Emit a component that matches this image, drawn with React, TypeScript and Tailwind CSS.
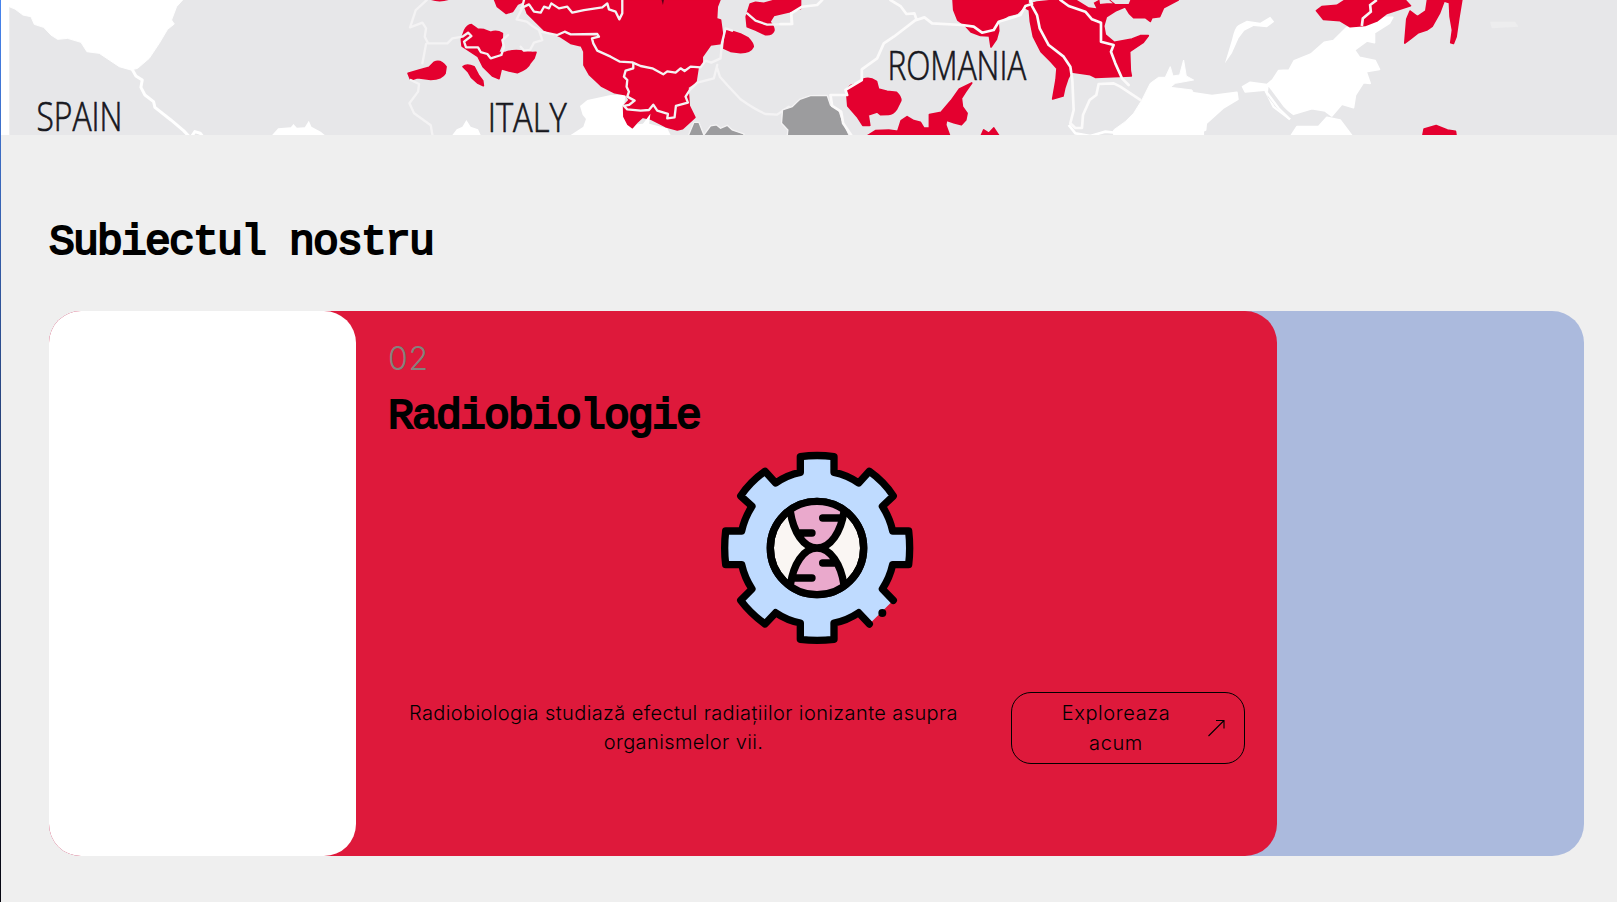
const LAND = '#e7e7e9';
const RED = '#e4002f';

function MapBanner() {
  return (
    <svg className="block h-[135px] w-full overflow-visible" viewBox="0 0 1617 135" role="img" aria-label="Map">
      <clipPath id="map-frame">
        <rect width="1617" height="135" />
      </clipPath>
      <g clipPath="url(#map-frame)">
        <rect width="1617" height="135" fill="#ffffff" />
        <rect x="8.3" width="1609" height="135" fill={LAND} />

        <g transform="scale(.33333)">
          <path fill="#fff" stroke="#fff" strokeWidth="3" strokeLinejoin="round" d="M25 0V20L42 27L66 45L90 50L100 73L128 82L150 105L170 118L200 115L240 127L258 155L295 160L325 180L355 200L390 210L410 205L445 175L475 130L500 88L520 72L512 60L527 20L545 0Z" />
          <path fill="none" stroke="#fff" strokeWidth="9" strokeLinejoin="round" d="M392 205L405 228L424 240L420 262L432 285L458 305L462 322L510 360L548 392L565 410M572 410L582 395L598 400L606 410" />
          <path fill="#fff" d="M814 405L832 385L870 382L878 372L888 383L912 382L924 362L932 380L960 395L972 405Z" />
        </g>

        <g transform="translate(380 0) scale(.33333)">
          <path fill="#fff" d="M735 285L690 285L620 300L598 318L606 345L616 357L608 380L570 405H870L860 385L800 370L750 375L728 330Z" />
          <path fill="#fff" d="M215 405L228 388L245 380L257 360L270 380L292 388L300 405Z" />
          <g fill={RED} stroke={RED} strokeWidth="5" strokeLinejoin="round">
            <path d="M150 -3Q176 6 205 -3ZM342 0L350 20L376 40L396 34L410 13L426 5V0Z" />
            <path d="M425 0L440 40L490 90L540 110L570 130L602 138L610 155V195L627 225L662 258L702 278L735 284L746 300L729 318L730 350L742 373L755 383L768 368L785 352L812 358L855 380L890 390L906 386L943 352L926 318L922 262L946 246L953 200L965 192V170L990 135L1023 130L1026 105L1020 60L1008 56L1010 20L1018 0Z" />
            <path d="M244 138L242 118L252 90Q260 75 272 74L290 87L310 89L330 97Q348 90 365 100L364 130L353 158L375 157Q400 148 430 154L455 158L466 157L460 175L448 190Q442 207 410 218L385 213L362 206L355 236L335 228L307 200L292 170Z" />
            <path d="M82 220L110 212L145 202L160 187Q180 178 196 200L193 220Q184 237 150 238L110 233L90 240ZM247 200Q258 190 280 200L293 225L306 242L308 257L292 250L272 232L262 215Z" />
            <path d="M1030 145L1036 87L1050 92L1080 102L1103 114Q1118 130 1118 140Q1110 158 1080 158L1050 154ZM1097 50L1109 12L1125 7L1150 10L1185 0H1260V26L1225 36L1180 46L1168 65Q1182 82 1180 92Q1174 106 1155 104L1125 90L1100 80Z" />
          </g>
          <g fill="none" stroke="#f4f3f4" strokeWidth="7" strokeLinejoin="round" strokeLinecap="round">
            <path d="M138 0L105 30L88 82L125 68L136 85L132 110L142 130L200 130L215 115L245 110L262 98L272 108L250 125L256 142L292 142L300 156L320 162L330 175L362 165L370 142L365 120L382 105M136 132L125 190M90 240L115 252L112 275L86 310L100 340L150 376L155 405" />
            <path d="M430 0L422 30L408 58L438 65L455 78L475 90L485 120L460 128L448 150L430 152L420 140M420 25L445 13L460 35L480 38L490 20L505 25L512 10L535 25L560 20L575 38L610 30L665 22L680 10L685 28L705 35L716 58L725 40V0" />
            <path d="M480 95L530 105L552 95L570 103L650 102L655 110L634 115L638 130L650 152L690 170L718 185L755 187L780 198L815 205L848 223L860 214L885 218L900 205L912 213L930 200L960 202L975 182L992 188L1020 175L1024 130L1035 85L1055 92" />
            <path d="M758 190V205L735 212L730 230L740 240L738 260L745 275L740 290L762 302L745 315L730 318L740 328L780 332L805 330L818 314L830 332L862 342L860 355L882 352L886 318L922 308L915 290L928 270L950 248L1000 235L1010 195M1010 205L1018 230L1040 255L1080 298Q1125 330 1155 342L1190 344L1225 320M1100 40L1125 62L1160 74L1232 72V40" />
          </g>
          <path fill="none" stroke="#fff" strokeWidth="13" d="M770 405L800 365L795 405M820 382L845 405" />
          <path fill="#9c9c9e" stroke="#f4f3f4" strokeWidth="4" d="M922 410L940 367L955 367L970 405L990 378L1008 375L1020 385L1040 376L1055 390L1090 402V415Z" />
          <path d="M843 0H850L847 15Z" fill="#5b0018" />
        </g>

        <g transform="translate(780 0) scale(.33333)">
          <path fill="#9c9c9e" stroke="#f4f3f4" strokeWidth="4" d="M6 330L35 320L58 298L90 287L140 286L150 315L175 330L185 360L208 410H20L22 390L3 370Z" />
          <path fill="#fff" stroke="#fff" strokeWidth="3" strokeLinejoin="round" d="M1000 390L1035 365L1060 340L1085 300L1110 250L1135 232L1155 232L1170 200L1178 228L1198 225L1210 180L1218 228L1240 240L1185 250L1170 262L1235 270L1245 290H1270V410H1000Z" />
          <g fill={RED} stroke={RED} strokeWidth="5" strokeLinejoin="round">
            <path d="M518 0L520 30L532 60L552 74L572 96L600 106L627 108L632 141L648 118L655 92L653 65L685 46L710 40L735 16L743 12V0Z" />
            <path d="M732 22L748 12L770 6L830 0H955L957 14L980 12L1005 12L990 0H1194L1150 23L1138 50L1115 53L1110 64L1095 53L1060 53L1047 40L1035 20L1005 33L978 50L970 78L975 105L1002 127L1055 117L1080 107L1104 107L1088 128L1048 155L1050 212L1053 228L945 232L930 224L873 216L863 235L853 265L848 288L817 297L827 240L830 205L812 185L782 155L759 110L750 65L747 30Z" />
            <path d="M198 270L210 257L240 247L250 237Q268 230 288 244L294 267L320 274L348 277Q362 290 361 302L348 328Q338 343 325 343L300 344L290 336L263 345L268 376L247 376L230 350L202 318Z" />
            <path d="M260 408L285 392L325 390L352 394L362 362L380 350L400 362L420 367L430 384L447 384V344L482 337L512 302L537 267L574 249L556 275L543 295L546 320L560 340L556 360L543 374L520 368L498 361L496 375L508 408ZM602 408L610 390L625 400L640 384L656 408Z" />
          </g>
          <path fill={LAND} d="M890 0L925 22L948 25L940 8L955 0ZM1005 12H1045L1050 0H990Z" />
          <g fill="none" stroke="#fbfafa" strokeWidth="8" strokeLinejoin="round" strokeLinecap="round">
            <path d="M0 72H35L32 40L65 20L110 15L125 0M330 0L360 18L378 42L402 40L408 58L340 110L310 130L290 175L244 208V240L195 270L200 285L150 285L155 318L182 335L188 370L212 405M408 60L432 52L455 70L545 75L580 80L605 98L640 90L655 65L720 45L735 18L755 12L750 0" />
            <path d="M755 18L770 45L778 85L805 135L850 170L870 200L876 240L880 330L870 370L885 384H905L908 345L928 300L948 285L955 252L1000 250L1020 260L1080 300M840 0L865 18L915 35L935 58L962 68L962 125L1000 135L992 155L1005 190L1025 235L1045 255" />
          </g>
          <path fill="none" stroke="#fff" strokeWidth="8" d="M865 375L885 400L930 408L975 395L1020 400" />
        </g>

        <g transform="translate(1190 0) scale(.33333)">
          <path fill="#fff" stroke="#fff" strokeWidth="5" strokeLinejoin="round" d="M247 240L265 212L297 210L312 182L362 162L402 127L430 122L470 82L520 80L565 52L608 52L598 70L553 98V128L530 123L493 150L508 172L555 182L568 208L528 215L540 250L520 248L496 285L490 323L455 313L425 348L405 333L365 326L310 343L272 315L230 270L165 276L157 260L180 247L230 254ZM0 277L65 287L140 277L143 298L98 325L48 370L46 390L0 410ZM302 408L320 380L385 380L410 352L450 360L486 408Z" />
          <path fill="#fff" d="M104 190L125 120Q134 80 145 75L170 62L210 68L240 50L252 65L230 82L190 78L162 92L145 115L125 160Z" />
          <path fill="#ededee" d="M900 65H975L985 80L905 85Z" />
          <path fill="none" stroke="#fff" strokeWidth="7" d="M225 270L250 320L300 358" />
          <path fill={LAND} d="M235 260L280 320L310 350L295 355L260 325L232 290Z" />
          <path fill="none" stroke="#fff" strokeWidth="7" strokeLinecap="round" d="M228 275L265 325L296 355" />
          <g fill={RED} stroke={RED} strokeWidth="5" strokeLinejoin="round">
            <path d="M379 32L395 20L440 16L465 0H645L661 17L590 40L560 63L525 76L480 80L450 62L400 58ZM644 129L650 57L660 33L682 50L707 33L712 0H815L806 55L798 110L790 130L782 128L787 90L780 50L778 8L762 3L748 40L726 79L710 90L685 98L660 117Z" />
            <path d="M698 408L702 387L738 377L772 390L796 394L798 408Z" />
          </g>
          <path fill="none" stroke="#f7f5f6" strokeWidth="8" d="M560 0L540 15L542 35L518 55L515 78" />
        </g>
      </g>

      <g fill="#17171d" stroke="#17171d" strokeWidth="0.7" fontFamily="'Open Sans', 'Noto Sans', sans-serif" fontSize="41" fontWeight="300">
        <text x="35.5" y="131" textLength="86" lengthAdjust="spacingAndGlyphs">SPAIN</text>
        <text x="487" y="132" textLength="79" lengthAdjust="spacingAndGlyphs">ITALY</text>
        <text x="887" y="80" textLength="139" lengthAdjust="spacingAndGlyphs">ROMANIA</text>
      </g>
    </svg>
  );
}

const GEAR =
  'M301 50Q351 43 402 50V97Q442 105 476 129L508 94Q552 125 580 168L547 199Q569 233 578 273H626Q632 324 626 374H578Q569 414 547 447L580 481L508 552L476 518Q442 541 402 549V598Q351 604 301 598V549Q261 541 227 518L195 552Q151 520 122 481L156 447Q134 414 125 374H77Q71 324 77 273H125Q134 233 156 199L122 168Q151 125 195 94L227 129Q261 105 301 97Z';
const GEAR_OUTLINE =
  'M580 481L547 447Q569 414 578 374H626Q632 324 626 273H578Q569 233 547 199L580 168Q552 125 508 94L476 129Q442 105 402 97V50Q351 43 301 50V97Q261 105 227 129L195 94Q151 125 122 168L156 199Q134 233 125 273H77Q71 324 77 374H125Q134 414 156 447L122 481Q151 520 195 552L227 518Q261 541 301 549V598Q351 604 402 598V549Q442 541 476 518L508 552';

function GearIcon() {
  return (
    <svg className="h-[220px] w-[230px]" viewBox="0 0 690 660" fill="none" stroke="#000" strokeWidth="22" strokeLinecap="round" strokeLinejoin="round">
      <path d={GEAR} fill="#bfdbff" stroke="none" />
      <path d={GEAR_OUTLINE} />
      <circle cx="351" cy="324" r="140" fill="#faf6f3" />
      <path d="M271 211Q351 155 432 211Q420 295 351 324Q283 295 271 211ZM271 437Q351 492 432 437Q420 350 351 324Q283 350 271 437Z" fill="#eaa9cc" stroke="none" />
      <circle cx="351" cy="324" r="140" />
      <path d="M271 215C280 275 310 324 351 324S423 275 432 215M271 435C280 374 310 324 351 324S423 374 432 435M368 234H426M292 279H336M368 369H408M280 414H336" />
      <circle cx="547" cy="519" r="12" fill="#000" stroke="none" />
    </svg>
  );
}

export default function App() {
  return (
    <div className="flex h-[902px] w-full overflow-hidden bg-[#efefef] text-black">
      <div className="w-px shrink-0 bg-linear-to-b from-[#4784ee] to-[#05050f]" />
      <main className="min-w-0 flex-1">
        <MapBanner />
        <section className="pt-[74px] pl-12">
          <h2 className="h-[102px] font-['Liberation_Mono',monospace] text-[43px] leading-[68px] font-normal tracking-[-1.8px] whitespace-pre [-webkit-text-stroke:2px_#000]">
            Subiectul nostru
          </h2>
          <div className="h-[545px] w-[1535px] rounded-[32px] bg-[#abbadd]">
            <div className="flex h-full w-[1228px] rounded-[32px] bg-[#de193b]">
              <div className="h-full w-[307px] shrink-0 rounded-[32px] bg-white" />
              <article className="flex flex-1 flex-col px-8 pt-7">
                <span className="h-10 font-[Inter,sans-serif] text-[32px] leading-10 font-light tracking-[0.8px] text-[#84827d]">
                  02
                </span>
                <h3 className="mt-1 h-[57px] font-['Liberation_Mono',monospace] text-[43px] leading-[68px] font-normal tracking-[-1.8px] [-webkit-text-stroke:2px_#000]">
                  Radiobiologie
                </h3>
                <div className="flex justify-center pr-1">
                  <GearIcon />
                </div>
                <div className="mt-8 flex items-center justify-between">
                  <p className="w-[591px] text-center font-[Inter,sans-serif] text-[20px] leading-[29px] font-light tracking-[0.39px]">
                    Radiobiologia studiază efectul radiațiilor ionizante asupra
                    <br />
                    organismelor vii.
                  </p>
                  <button className="flex h-[72px] w-[234px] items-center justify-between rounded-[20px] border border-black pr-[18px] pl-[49px]">
                    <span className="w-[110px] text-center font-[Inter,sans-serif] text-[20px] leading-[30px] font-light tracking-[0.6px]">
                      Exploreaza acum
                    </span>
                    <svg className="h-[18px] w-[18px]" viewBox="0 0 18 18" fill="none" stroke="#000" strokeWidth="1.1">
                      <path d="M.5 17L16 1.5M8 1.5H16V9.5" />
                    </svg>
                  </button>
                </div>
              </article>
            </div>
          </div>
        </section>
      </main>
    </div>
  );
}
